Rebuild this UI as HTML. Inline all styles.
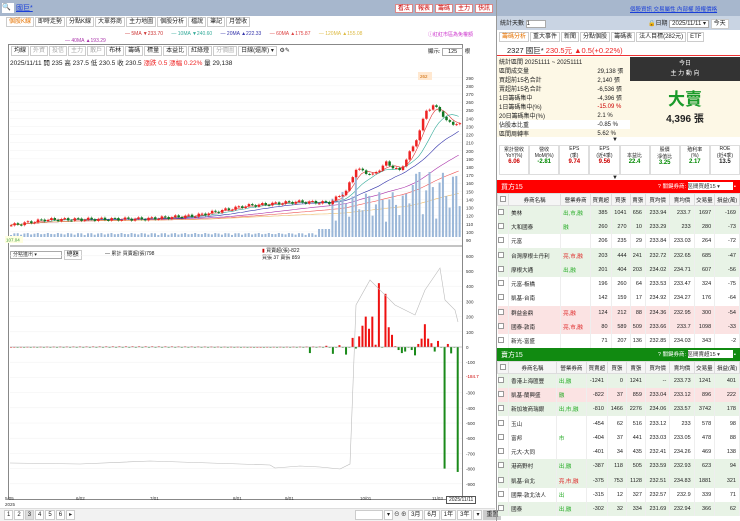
<!DOCTYPE html><html><head><meta charset="utf-8"><style>
*{box-sizing:border-box;margin:0;padding:0}
body{width:740px;height:521px;overflow:hidden;background:#fff;font-family:"Liberation Sans","Noto Sans CJK TC",sans-serif;font-size:6px;color:#222;position:relative}
.a{position:absolute}
.top{left:0;top:0;width:740px;height:16px;background:#a7b7cd}
.tab{display:inline-block;border:1px solid #ccc;background:#fff;padding:0 2px;height:10px;line-height:9px;margin-right:1px;font-size:6px}
.rb{display:inline-block;border:1px solid #d88;background:#fff;color:#c00;padding:0 2px;height:9px;line-height:8px;font-size:6px;margin-right:2px}
table{border-collapse:collapse;width:100%}
td{font-size:5.5px;height:14.3px;text-align:right;padding-right:3px;border-right:1px solid #eee;white-space:nowrap}
td:first-child{text-align:center}
td:nth-child(2),td:nth-child(3){text-align:left;padding-left:2px}
.g td{background:#e8f3e6}.r td{background:#fbe3e3}
th{font-size:5.5px;font-weight:normal;height:12px;border:1px solid #ddd;background:#f5f5f5}
.cb{display:inline-block;width:6px;height:6px;border:1px solid #999;background:#fff}
.st td{height:9px;font-size:6px;border:none}
</style></head><body>
<div class="a top"></div>
<div class="a" style="left:2px;top:3px;width:12px;height:10px;background:#fff;font-size:7px">🔍</div>
<div class="a" style="left:16px;top:3px;color:#1a3fd8;font-size:7px;text-decoration:underline">國巨*</div>
<div class="a" style="left:370px;top:4px;width:125px;text-align:right"><span class="rb">看法</span><span class="rb">報表</span><span class="rb">籌碼</span><span class="rb">主力</span><span class="rb">快訊</span></div>
<div class="a" style="left:630px;top:5px;color:#1a3fd8;font-size:5.5px;text-decoration:underline">個股資訊 交易屬性 內部權 股權價格</div>
<div class="a" style="left:0;top:16px;width:495px;height:505px;background:#fff"></div>
<div class="a" style="left:6px;top:17px"><span class="tab" style="color:#e67300">個股K線</span><span class="tab">即時走勢</span><span class="tab">分點K線</span><span class="tab">大單券商</span><span class="tab">主力地圖</span><span class="tab">個股分析</span><span class="tab">檔說</span><span class="tab">筆記</span><span class="tab">月營收</span></div>
<div class="a" style="left:125px;top:31px;font-size:5px;white-space:nowrap"><span style="color:#c33">— 5MA ▼233.70</span>&nbsp;&nbsp;&nbsp;&nbsp;&nbsp; <span style="color:#3a9">— 10MA ▼240.60</span>&nbsp;&nbsp;&nbsp;&nbsp;&nbsp; <span style="color:#33a">— 20MA ▲222.33</span>&nbsp;&nbsp;&nbsp;&nbsp;&nbsp; <span style="color:#d44">— 60MA ▲175.87</span>&nbsp;&nbsp;&nbsp;&nbsp;&nbsp; <span style="color:#db4">— 120MA ▲155.08</span></div>
<div class="a" style="left:65px;top:38px;font-size:5px;color:#a3a"> — 40MA ▲193.29</div>
<div class="a" style="left:428px;top:31px;font-size:5px;color:#c3c">ⓘ紅紅市區為免權額</div>
<div class="a" style="left:8px;top:44px;width:455px;height:456px;border:1px solid #888"></div>
<div class="a" style="left:11px;top:46px"><span class="tab">均線</span><span class="tab" style="color:#aaa">外資</span><span class="tab" style="color:#aaa">投信</span><span class="tab" style="color:#aaa">主力</span><span class="tab" style="color:#aaa">散戶</span><span class="tab">布林</span><span class="tab">籌碼</span><span class="tab">標量</span><span class="tab">本益比</span><span class="tab">紅綠燈</span><span class="tab" style="color:#aaa">分價圖</span><span class="tab">日線(還原) ▾</span> ⚙✎</div>
<div class="a" style="left:10px;top:57px;font-size:6.5px;white-space:nowrap">2025/11/11 開 235 高 237.5 低 230.5 收 230.5 <span style="color:#e22">漲跌 0.5 漲幅 0.22%</span> 量 29,138</div>
<div class="a" style="left:428px;top:47px;font-size:5.5px">顯示: <span style="border:1px solid #aaa;padding:0 5px">125</span> 根</div>
<div class="a" style="left:10px;top:250px"><span style="border:1px solid #aaa;display:inline-block;width:52px;height:8px;font-size:5px;line-height:7px;padding-left:2px">分點進出 ▾</span> <span class="tab">總額</span></div>
<div class="a" style="left:105px;top:250px;font-size:5px">— 累計 買賣超(張)798</div>
<div class="a" style="left:262px;top:248px;font-size:5px;line-height:7px"><span style="color:#c00">▮</span> 買賣超(張)-822<br>買張 37 賣張 859</div>
<svg class="a" style="left:0;top:0" width="495" height="521" id="s"></svg>
<div class="a" style="left:0;top:508px;width:495px;height:13px;background:#f2f2f2;border-top:1px solid #ddd"></div>
<div class="a" style="left:4px;top:510px;font-size:6px"><span class="tab">1</span><span class="tab">2</span><span class="tab" style="background:#ddd">3</span><span class="tab">4</span><span class="tab">5</span><span class="tab">6</span><span class="tab">▸</span></div>
<div class="a" style="left:355px;top:510px;font-size:5.5px"><span class="tab" style="width:28px">&nbsp;</span><span class="tab">▾</span>⊖ ⊕ <span class="tab">3月</span><span class="tab">6月</span><span class="tab">1年</span><span class="tab">3年</span><span class="tab">▾</span><span class="tab" style="background:#ccc">重置</span></div>
<div class="a" style="left:446px;top:496px;font-size:5px;border:1px solid #555;background:#fff;padding:0 2px">2025/11/11</div>
<div class="a" style="left:496px;top:0;width:1px;height:521px;background:#999"></div>
<div class="a" style="left:497px;top:16px;width:243px;height:14px;background:#c9d4e3"></div>
<div class="a" style="left:500px;top:18px;font-size:6px">統計天數 <span style="background:#fff;border:1px solid #aaa;display:inline-block;width:20px;height:8px">1</span></div>
<div class="a" style="left:648px;top:18px;font-size:6px">🔒日期 <span style="background:#fff;border:1px solid #aaa;padding:0 2px">2025/11/11 ▾</span> <span class="tab">今天</span></div>
<div class="a" style="left:499px;top:32px"><span class="tab" style="color:#e67300">籌碼分析</span><span class="tab">重大事件</span><span class="tab">新聞</span><span class="tab">分點個股</span><span class="tab">籌碼表</span><span class="tab">法人目標(282元)</span><span class="tab">ETF</span></div>
<div class="a" style="left:497px;top:43px;width:243px;height:13px;border-bottom:1px solid #e33;font-size:7.5px;padding:2px 10px">2327 國巨* <span style="color:#e22">230.5元 ▲0.5(+0.22%)</span></div>
<div class="a" style="left:497px;top:57px;width:133px;height:80px;background:#fdf8e6"></div>
<table class="a st" style="left:499px;top:57px;width:131px">
<tr><td style="text-align:left">統計區間 20251111 ~ 20251111</td><td></td></tr>
<tr><td style="text-align:left">區間成交量</td><td>29,138 張</td></tr>
<tr><td style="text-align:left">買超前15名合計</td><td>2,140 張</td></tr>
<tr><td style="text-align:left">賣超前15名合計</td><td>-6,536 張</td></tr>
<tr><td style="text-align:left">1日籌碼集中</td><td>-4,396 張</td></tr>
<tr><td style="text-align:left">1日籌碼集中(%)</td><td style="color:#c00">-15.09 %</td></tr>
<tr><td style="text-align:left">20日籌碼集中(%)</td><td>2.1 %</td></tr>
<tr><td style="text-align:left;background:#fff">佔股本比重</td><td style="background:#fff">-0.85 %</td></tr>
<tr><td style="text-align:left">區間周轉率</td><td>5.62 %</td></tr></table>
<div class="a" style="left:630px;top:57px;width:110px;height:24px;background:#333;color:#fff;text-align:center;font-size:6px;line-height:10px;padding-top:2px">今日<br>主 力 動 向</div>
<div class="a" style="left:630px;top:81px;width:110px;height:56px;background:#fdf8e6;text-align:center"><div style="color:#1a9a2a;font-size:17px;font-weight:bold;margin-top:4px">大賣</div><div style="font-size:10px;font-weight:bold">4,396 張</div></div>
<div class="a" style="left:612px;top:137px;font-size:6px">▼</div>
<div class="a" style="left:499px;top:145px;width:241px;height:30px;font-size:5px;text-align:center;display:flex">
<div style="flex:1;border:1px solid #ddd">累計營收<br>YoY(%)<br><b style="color:#c00;font-size:6px">6.06</b></div><div style="flex:1;border:1px solid #ddd">營收<br>MoM(%)<br><b style="color:#080;font-size:6px">-2.81</b></div><div style="flex:1;border:1px solid #ddd">EPS<br>(季)<br><b style="color:#c00;font-size:6px">9.74</b></div><div style="flex:1;border:1px solid #ddd">EPS<br>(近4季)<br><b style="color:#c00;font-size:6px">9.56</b></div><div style="flex:1;border:1px solid #ddd"><br>本益比<br><b style="color:#080;font-size:6px">22.4</b></div><div style="flex:1;border:1px solid #ddd">股價<br>淨值比<br><b style="color:#080;font-size:6px">3.25</b></div><div style="flex:1;border:1px solid #ddd">殖利率<br>(%)<br><b style="color:#080;font-size:6px">2.17</b></div><div style="flex:1;border:1px solid #ddd">ROE<br>(近4季)<br><b style="font-size:6px">13.5</b></div></div>
<div class="a" style="left:612px;top:175px;font-size:6px">▼</div>
<div class="a" style="left:497px;top:180px;width:243px;height:13px;background:#f00;color:#fff;font-size:7px;padding:2px 4px">買方15<span style="float:right;font-size:5.5px">? 關鍵券商: <span style="background:#fff;color:#333;display:inline-block;width:45px">區間買超15 ▾</span> ▪</span></div>
<div class="a" style="left:497px;top:193px;width:243px" id="bt"></div>
<div class="a" style="left:497px;top:348px;width:243px;height:13px;background:#118a11;color:#fff;font-size:7px;padding:2px 4px">賣方15<span style="float:right;font-size:5.5px">? 關鍵券商: <span style="background:#fff;color:#333;display:inline-block;width:45px">區間賣超15 ▾</span> ▪</span></div>
<div class="a" style="left:497px;top:361px;width:243px" id="st"></div>
<script>
var H='<tr><th><span class="cb"></span></th><th>券商名稱</th><th>營業券商</th><th>買賣超</th><th>買張</th><th>賣張</th><th>買均價</th><th>賣均價</th><th>交易量</th><th>損益(萬)</th></tr>';
function tb(id,rows){var s='<table>'+H;rows.forEach(function(r){s+='<tr class="'+r[0]+'"><td><span class="cb"></span></td><td>'+r[1]+'</td><td style="color:'+(r[2].indexOf('亮')>=0?'#d22':'#2a2')+'">'+r[2]+'</td>';for(var i=3;i<r.length;i++)s+='<td>'+r[i]+'</td>';s+='</tr>'});document.getElementById(id).innerHTML=s+'</table>'}
tb('bt',[['g','美林','出,市,融',385,1041,656,233.94,233.7,1697,-169],['g','大和國泰','融',260,270,10,233.29,233,280,-73],['','元富','',206,235,29,233.84,233.03,264,-72],['g','台灣摩根士丹利','亮,市,融',203,444,241,232.72,232.65,685,-47],['g','摩根大通','出,融',201,404,203,234.02,234.71,607,-56],['','元富-板橋','',196,260,64,233.53,233.47,324,-75],['','凱基-台南','',142,159,17,234.92,234.27,176,-64],['r','群益金鼎','亮,融',124,212,88,234.36,232.95,300,-54],['r','國泰-敦南','亮,市,融',80,589,509,233.66,233.7,1098,-33],['','新光-富盛','',71,207,136,232.85,234.03,343,-2]]);
tb('st',[['g','香港上海匯豐','出,融',-1241,0,1241,'--',233.73,1241,401],['r','凱基-蘭興盛','融',-822,37,859,233.04,233.12,896,222],['g','新加坡商瑞銀','出,市,融',-810,1466,2276,234.06,233.57,3742,178],['','玉山','',-454,62,516,233.12,233,578,98],['','富邦','市',-404,37,441,233.03,233.05,478,88],['','元大-大同','',-401,34,435,232.41,234.26,469,138],['g','港商野村','出,融',-387,118,505,233.59,232.93,623,94],['g','凱基-台北','亮,市,融',-375,753,1128,232.51,234.83,1881,321],['','國票-敦北法人','出',-315,12,327,232.57,232.9,339,71],['g','國泰','出,融',-302,32,334,231.69,232.94,366,62]]);
var s=document.getElementById('s'),o='';
function R(x,y,w,h,c){o+='<rect x="'+x+'" y="'+y+'" width="'+w+'" height="'+h+'" fill="'+c+'"/>'}
function T(x,y,t,c){o+='<text x="'+x+'" y="'+y+'" font-size="4.5" fill="'+(c||'#333')+'">'+t+'</text>'}
for(var p=90;p<=290;p+=10){var y=94+(270-p)*0.811;o+='<line x1="10" x2="462" y1="'+y+'" y2="'+y+'" stroke="#f2f2f2" stroke-width="0.5"/>';T(466,y+2,p)}
for(var v=-900;v<=600;v+=100){var y=347-v*0.152;o+='<line x1="10" x2="462" y1="'+y+'" y2="'+y+'" stroke="#f0f0f0" stroke-width="0.5"/>';if(v!=-200)T(466,y+2,v)}
o+='<line x1="10" x2="462" y1="246" y2="246" stroke="#888"/>';
T(466,378,'-184.7','#c00');
var k=[[0,108],[10,115],[40,116],[55,120],[70,132],[85,137],[95,136],[100,150],[103,178],[108,170],[112,185],[116,175],[120,205],[122,225],[124,250],[126,255],[128,250],[130,236],[134,232]];
function P(i){for(var j=0;j<k.length-1;j++)if(i<=k[j+1][0]){var a=k[j],b=k[j+1];return a[1]+(b[1]-a[1])*(i-a[0])/(b[0]-a[0])}return 232}
var N=135,dx=452/N,cl=[];for(var i=0;i<N;i++)cl.push(P(i)+Math.sin(i*1.7)*2);
function Y(p){return 94+(270-p)*0.811}
[[5,'#d33'],[10,'#3a9'],[20,'#33a'],[40,'#a3a'],[60,'#e55'],[120,'#eb6']].forEach(function(m){var d='';for(var i=0;i<N;i++){var a=0,c=0;for(var j=Math.max(0,i-m[0]+1);j<=i;j++){a+=cl[j];c++}a=a/c;d+=(i?'L':'M')+(10+i*dx).toFixed(1)+' '+Y(a).toFixed(1)}o+='<path d="'+d+'" fill="none" stroke="'+m[1]+'" stroke-width="0.6"/>'});
for(var i=0;i<N;i++){var x=10+i*dx,op=i?cl[i-1]:cl[0],c=cl[i],up=c>=op,col=up?'#e22':'#172';var vol=i<92?2+Math.abs(Math.sin(i))*2:(i<96?8:15+Math.abs(Math.sin(i*2.3))*(i>118?50:30));if(i==103)vol=60;if(i==122)vol=65;if(i==120)vol=52;R(x,237-vol,dx*0.6,vol,'#9bb7d8');o+='<line x1="'+(x+1.2)+'" x2="'+(x+1.2)+'" y1="'+Y(Math.max(op,c)+1.5)+'" y2="'+Y(Math.min(op,c)-1.5)+'" stroke="'+col+'" stroke-width="0.5"/>';R(x,Y(Math.max(op,c)),dx*0.75,Math.max(1,Math.abs(op-c)*0.811),col)}
R(5,236,18,7,'#ffffe0');T(6,241.5,'107.04','#393');
R(418,72,14,8,'#ffe8d0');T(420,78,'262','#c60');
var b={91:-40,96:8,98:-45,100:12,102:-50,104:60,105:-10,106:70,107:140,108:200,109:120,110:200,111:15,112:420,114:350,115:130,116:80,117:5,118:-20,119:-40,120:-30,122:-20,123:-55,124:20,125:55,126:150,127:55,128:25,129:-30,130:40,132:-800,133:20,134:-42,136:-822};
for(var i=0;i<N+2;i++){var v=b[i]!==undefined?b[i]:(Math.sin(i*3.1)*4);var x=10+i*(450/137);var c=v>=0?'#e11':'#1a8a1a';var h=Math.abs(v)*0.152;R(x,v>=0?347-h:347,2,Math.max(h,0.6),c)}
o+='<line x1="10" x2="462" y1="347" y2="347" stroke="#999" stroke-width="0.5"/>';
var ld='M10 463 L80 464 L150 461 L210 463 L270 465 L275 468 L300 466 L320 467 L340 469 L350 464 L356 305 L370 280 L395 305 L415 315 L425 290 L440 268 L445 300 L455 310 L458 322';o+='<path d="'+ld+'" fill="none" stroke="#bbb" stroke-width="0.6"/>';
[['5/05',5],['6/02',76],['7/01',150],['8/01',233],['9/01',285],['10/01',360],['11/03',432]].forEach(function(t){T(t[1],500,t[0])});T(5,506,'2025');
s.innerHTML=o;
</script>
</body></html>
